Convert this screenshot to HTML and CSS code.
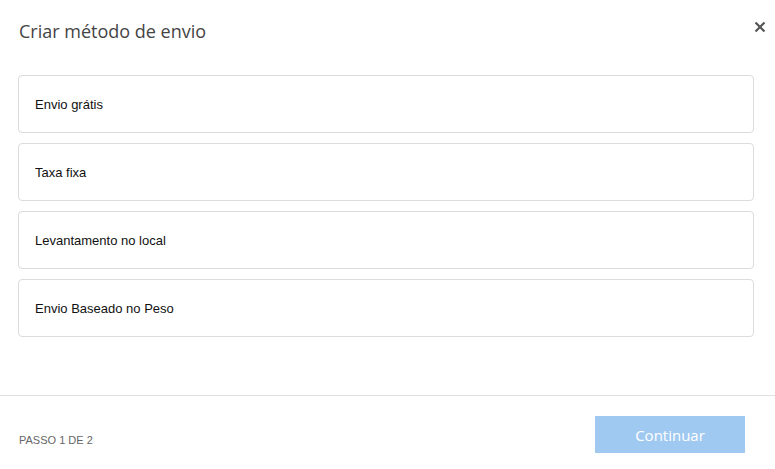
FILE: index.html
```html
<!DOCTYPE html>
<html lang="pt">
<head>
<meta charset="utf-8">
<title>Criar método de envio</title>
<link rel="stylesheet" href="styles.css">
</head>
<body>
<div class="modal">
  <header class="modal-header">
    <h1 class="modal-title">Criar método de envio</h1>
    <button class="close" aria-label="Fechar">
      <svg width="12" height="12" viewBox="0 0 12 12"><path d="M1.5 1.5 L10.5 10.5 M10.5 1.5 L1.5 10.5" stroke="#555" stroke-width="2.2" stroke-linecap="butt"/></svg>
    </button>
  </header>
  <div class="options">
    <div class="option">Envio grátis</div>
    <div class="option">Taxa fixa</div>
    <div class="option">Levantamento no local</div>
    <div class="option">Envio Baseado no Peso</div>
  </div>
  <footer class="modal-footer">
    <span class="step">PASSO 1 DE 2</span>
    <button class="continue">Continuar</button>
  </footer>
</div>
</body>
</html>
```
FILE: styles.css
```css
html, body {
  margin: 0;
  padding: 0;
  background: #fff;
}
.modal {
  width: 775px;
  height: 469px;
  display: flex;
  flex-direction: column;
  box-sizing: border-box;
}
.modal-header {
  display: flex;
  align-items: center;
  justify-content: space-between;
  height: 64px;
  padding: 0 9px 0 19px;
  box-sizing: border-box;
}
.modal-title {
  margin: 0;
  font-family: "Open Sans", sans-serif;
  font-weight: 400;
  font-size: 18px;
  color: #444;
  position: relative;
  top: -1px;
}
.close {
  border: 0;
  background: none;
  padding: 0;
  width: 12px;
  height: 12px;
  display: flex;
  position: relative;
  top: -5px;
  cursor: pointer;
}
.options {
  display: flex;
  flex-direction: column;
  gap: 10px;
  padding: 11px 21px 0 18px;
  flex: 1;
}
.option {
  height: 58px;
  box-sizing: border-box;
  border: 1px solid #dcdcdc;
  border-radius: 4px;
  display: flex;
  align-items: center;
  padding-left: 16px;
  font-family: "Liberation Sans", Arial, sans-serif;
  font-size: 13px;
  color: #111;
}
.modal-footer {
  border-top: 1px solid #e0e0e0;
  height: 74px;
  box-sizing: border-box;
  display: flex;
  align-items: center;
  justify-content: space-between;
  padding: 0 30px 0 19px;
}
.step {
  font-family: "Liberation Sans", Arial, sans-serif;
  font-size: 11px;
  color: #666;
  position: relative;
  top: 7px;
}
.continue {
  width: 150px;
  height: 37px;
  border: 0;
  background: #a0c9f1;
  color: #fff;
  font-family: "Open Sans", sans-serif;
  font-size: 15px;
  padding: 0;
  position: relative;
  top: 2px;
}
```
